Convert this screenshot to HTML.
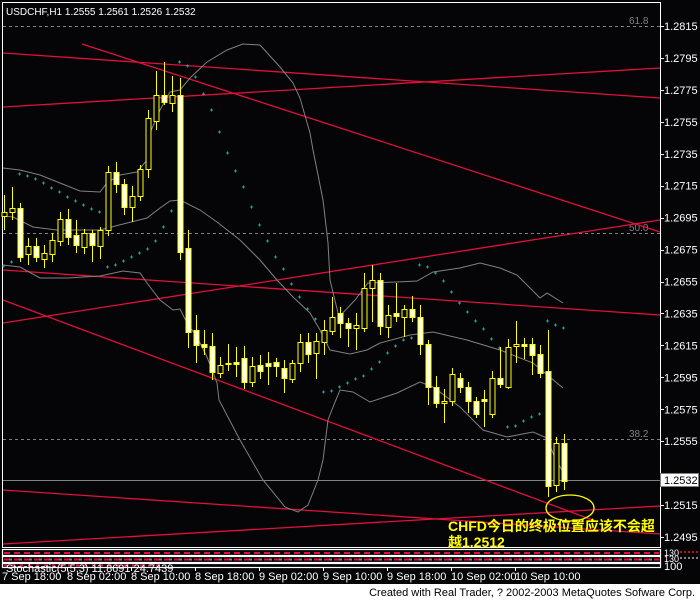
<!DOCTYPE html>
<html><head><meta charset="utf-8"><style>
html,body{margin:0;padding:0;background:#fff;}
body{width:700px;height:600px;overflow:hidden;position:relative;font-family:"Liberation Sans",sans-serif;}
svg{position:absolute;left:0;top:0;}
</style></head><body>
<svg width="700" height="600" viewBox="0 0 700 600" xmlns="http://www.w3.org/2000/svg">
<rect x="0" y="0" width="700" height="584" fill="#050407"/>
<rect x="0" y="584" width="700" height="16" fill="#fff"/>
<path d="M2.5 2.5 H660.5 V547.5 H2.5 Z" fill="none" stroke="#fff" stroke-width="1"/>
<g stroke="#808080" stroke-width="1" stroke-dasharray="3,3">
<line x1="3" y1="26.5" x2="660" y2="26.5"/>
<line x1="3" y1="233.5" x2="660" y2="233.5"/>
<line x1="3" y1="439.5" x2="660" y2="439.5"/>
</g>
<line x1="3" y1="480.5" x2="660" y2="480.5" stroke="#808080"/>
<g fill="#808080" font-size="10" font-family="Liberation Sans,sans-serif">
<text x="629" y="24">61.8</text><text x="629" y="231">50.0</text><text x="629" y="437">38.2</text>
</g>
<g stroke="#e0103c" stroke-width="1.3" fill="none">
<line x1="82" y1="44" x2="660" y2="232"/>
<line x1="3" y1="53" x2="660" y2="98"/>
<line x1="3" y1="107" x2="660" y2="68"/>
<line x1="3" y1="270" x2="660" y2="315"/>
<line x1="3" y1="323" x2="660" y2="220"/>
<line x1="3" y1="300" x2="595" y2="521"/>
<line x1="3" y1="490" x2="660" y2="534"/>
<line x1="3" y1="544" x2="660" y2="506"/>
</g>
<g stroke="#808080" stroke-width="1" fill="none">
<polyline points="3,168 20,170 40,175 60,183 80,191 100,192 107,183 120,175 137,172 147,160 150,133 160,110 170,92 180,90 190,78 207,62 227,50 243,44 260,45 280,67 293,83 300,98 310,133 313,150 323,200 328,243 330,280 339,317 355,300 368,283 397,282 417,281 433,272 460,268 480,263 500,268 517,275 540,298 547,293 563,303"/>
<polyline points="3,216 13,217 33,227 57,230 100,230 127,223 147,218 160,208 170,201 180,200 200,210 217,222 240,240 260,260 277,280 293,297 310,313 320,330 330,350 350,354 367,350 380,343 410,335 433,332 467,340 500,350 533,363 563,388"/>
<polyline points="3,265 20,267 40,278 67,278 100,276 123,271 140,273 150,287 160,300 173,310 180,309 187,323 197,337 207,357 217,383 219,400 240,440 263,480 285,507 298,512 308,505 318,480 323,460 328,420 333,407 340,390 353,392 370,402 397,393 420,382 433,387 460,407 483,430 507,437 533,432 547,438 555,458 563,472"/>
</g>
<g fill="#1ea0a0" id="sar"></g>
<g id="c" stroke="#ffff00" stroke-width="1"></g>
<ellipse cx="570" cy="508" rx="24" ry="13" fill="none" stroke="#ffff00" stroke-width="1.3"/>
<g fill="#ffff00" font-weight="bold" font-size="14" font-family="'Liberation Sans','Noto Sans CJK SC',sans-serif">
<text x="448" y="531">CHFD今日的终极位置应该不会超</text>
<text x="448" y="547">越1.2512</text>
</g>
<g fill="#fff" font-size="11" font-family="Liberation Sans,sans-serif" id="ax"></g>
<rect x="660.5" y="473.5" width="38" height="13" fill="#fff" stroke="#808080"/>
<text x="664" y="484" font-size="11" fill="#000">1.2532</text>
<g fill="none" stroke="#fff" stroke-width="1.2">
<rect x="2.5" y="549.5" width="658" height="6"/>
<rect x="2.5" y="556.5" width="658" height="6"/>
<rect x="2.5" y="563.5" width="658" height="4"/>
</g>
<g stroke-width="2" stroke-dasharray="6,4">
<line x1="4" y1="553" x2="659" y2="553" stroke="#e0103c"/>
<line x1="4" y1="559.5" x2="659" y2="559.5" stroke="#e0103c"/>
<line x1="9" y1="559.5" x2="659" y2="559.5" stroke="#808080" stroke-dasharray="3,7"/>
<line x1="4" y1="565.5" x2="160" y2="565.5" stroke="#e0103c" stroke-dasharray="3,5"/>
<line x1="680" y1="552" x2="700" y2="552" stroke="#c01010" stroke-dasharray="2,2"/>
<line x1="680" y1="558" x2="700" y2="558" stroke="#808080" stroke-dasharray="2,2"/>
</g>
<g fill="#fff" font-size="11" font-family="Liberation Sans,sans-serif">
<text x="664" y="556" font-size="9">130</text>
<text x="664" y="562" font-size="9">130</text>
<text x="664" y="570">100</text>
<text x="6" y="572" font-size="11">Stochastic(5,5,3)  11.8691  24.7439</text>
</g>
<g fill="#fff" font-size="11" font-family="Liberation Sans,sans-serif">
<text x="2" y="580">7 Sep 18:00</text><text x="67" y="580">8 Sep 02:00</text><text x="131" y="580">8 Sep 10:00</text>
<text x="195" y="580">8 Sep 18:00</text><text x="259" y="580">9 Sep 02:00</text><text x="323" y="580">9 Sep 10:00</text>
<text x="387" y="580">9 Sep 18:00</text><text x="451" y="580">10 Sep 02:00</text><text x="515" y="580">10 Sep 10:00</text>
</g>
<g stroke="#fff"><line x1="67.5" y1="567" x2="67.5" y2="571"/><line x1="131.5" y1="567" x2="131.5" y2="571"/><line x1="195.5" y1="567" x2="195.5" y2="571"/><line x1="259.5" y1="567" x2="259.5" y2="571"/><line x1="323.5" y1="567" x2="323.5" y2="571"/><line x1="387.5" y1="567" x2="387.5" y2="571"/><line x1="451.5" y1="567" x2="451.5" y2="571"/><line x1="515.5" y1="567" x2="515.5" y2="571"/></g>
<text x="6" y="15" fill="#fff" font-size="10" font-family="Liberation Sans,sans-serif">USDCHF,H1  1.2555 1.2561 1.2526 1.2532</text>
<text x="695" y="596" text-anchor="end" fill="#000" font-size="11" font-family="Liberation Sans,sans-serif">Created with Real Trader, ? 2002-2003 MetaQuotes Sofware Corp.</text>
</svg>
<script>
var NS="http://www.w3.org/2000/svg";
var C=[[212,216,195,230,0],[208,212,187,220,0],[208,257,203,262,1],[246,254,238,265,0],[246,257,238,262,1],[253,259,245,268,0],[240,254,233,262,0],[219,241,212,246,0],[219,237,209,245,1],[235,245,220,253,1],[233,247,229,254,0],[233,245,230,262,1],[230,246,227,259,0],[172,230,166,236,0],[172,184,162,193,1],[184,207,179,215,1],[196,207,186,222,0],[169,196,165,201,0],[118,169,110,178,0],[95,121,71,130,0],[95,102,62,105,1],[95,103,76,112,0],[95,252,78,260,1],[248,332,230,348,1],[330,345,315,363,1],[344,347,330,355,1],[346,372,333,380,1],[365,373,357,378,0],[363,364,344,371,0],[362,364,347,377,1],[358,382,346,389,1],[366,382,357,387,0],[365,371,355,379,1],[363,366,352,385,1],[362,366,358,377,1],[368,378,360,393,1],[363,379,360,383,0],[342,363,334,372,0],[342,354,333,363,1],[341,353,333,379,0],[330,342,320,355,0],[317,331,297,335,0],[313,323,307,338,1],[323,328,318,347,1],[325,328,313,350,0],[288,328,273,332,0],[280,288,265,322,0],[280,326,273,335,1],[315,327,305,338,0],[313,316,283,322,1],[309,317,305,337,0],[309,317,296,322,1],[317,344,305,355,1],[344,387,340,405,1],[387,403,376,408,1],[401,403,389,423,0],[374,401,368,406,0],[378,387,373,393,1],[387,401,382,413,1],[401,414,397,418,1],[399,401,390,427,1],[378,414,371,418,0],[378,384,347,388,1],[347,387,339,389,0],[344,346,321,363,0],[344,346,338,359,1],[344,355,338,375,1],[354,373,345,378,1],[371,486,330,497,1],[443,485,437,492,0],[443,481,434,490,1]];
var g=document.getElementById("c");
C.forEach(function(d,i){var c=4+8*i+0.5;
var l=document.createElementNS(NS,"line");l.setAttribute("x1",c);l.setAttribute("x2",c);l.setAttribute("y1",d[2]);l.setAttribute("y2",d[3]);g.appendChild(l);
var r=document.createElementNS(NS,"rect");r.setAttribute("x",c-2.5);r.setAttribute("y",d[0]+0.5);r.setAttribute("width",5);r.setAttribute("height",Math.max(1,d[1]-d[0]));r.setAttribute("fill",d[4]?"#fff":"#050407");g.appendChild(r);});
var S=[[19,174],[27,176],[35,179],[43,183],[51,188],[59,192],[67,197],[75,201],[83,205],[91,209],[99,212],[3,266],[11,262],[107,267],[115,265],[123,261],[131,257],[139,253],[147,249],[155,241],[163,227],[171,211],[179,62],[187,66],[195,77],[203,94],[211,110],[219,132],[227,153],[235,171],[243,187],[251,207],[259,225],[267,241],[275,257],[283,269],[291,284],[299,297],[307,309],[315,319],[323,392],[331,391],[339,387],[347,383],[355,379],[363,376],[371,369],[379,362],[387,353],[395,346],[403,340],[411,338],[419,265],[427,267],[435,273],[443,281],[451,292],[459,303],[467,312],[475,321],[483,329],[491,339],[499,348],[507,427],[515,426],[523,421],[531,417],[539,414],[547,321],[555,325],[563,328]];
var s=document.getElementById("sar");
S.forEach(function(p){var a=document.createElementNS(NS,"path");a.setAttribute("d","M"+(p[0]-1)+" "+(p[1]-0.5)+"h3v1h-3zM"+(p[0])+" "+(p[1]-1.5)+"h1v3h-1z");s.appendChild(a);});
var ax=document.getElementById("ax");
for(var k=0;k<=16;k++){var p=1.2815-0.002*k,y=26+k*31.94;if(Math.abs(y-480)<8)continue;
var t=document.createElementNS(NS,"text");t.setAttribute("x",664);t.setAttribute("y",y+4);t.textContent=p.toFixed(4);ax.appendChild(t);
var tl=document.createElementNS(NS,"line");tl.setAttribute("x1",660);tl.setAttribute("x2",664);tl.setAttribute("y1",Math.round(y)+0.5);tl.setAttribute("y2",Math.round(y)+0.5);tl.setAttribute("stroke","#fff");ax.appendChild(tl);}
</script>
</body></html>
